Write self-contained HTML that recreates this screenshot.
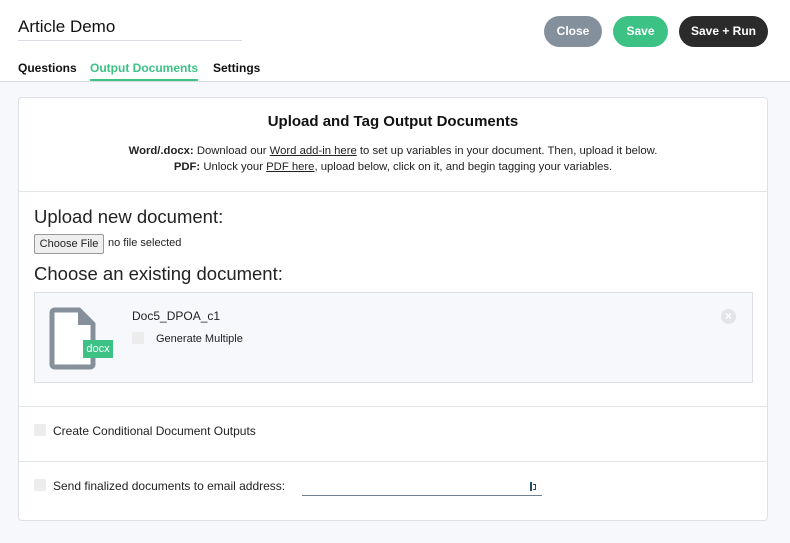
<!DOCTYPE html>
<html><head><meta charset="utf-8"><style>
*{box-sizing:border-box;margin:0;padding:0}
body{width:790px;height:543px;overflow:hidden;background:#f7f8fb;font-family:"Liberation Sans",sans-serif;color:#222;position:relative}
.top{position:absolute;left:0;top:0;width:790px;height:82px;background:#fff;border-bottom:1px solid #d8dbe0}
.abs{position:absolute}
.btn{position:absolute;top:16px;height:31px;border-radius:16px;color:#fff;font-weight:bold;font-size:12px;text-align:center;line-height:31px}
.card{position:absolute;left:18px;top:97px;width:750px;height:424px;background:#fff;border:1px solid #dde0e5;border-radius:4px}
.hr{position:absolute;left:0;width:748px;height:1px;background:#e2e4e8}
.cb{position:absolute;width:12px;height:12px;background:#ececec;border-radius:2px}
</style></head><body>
<div class="top">
 <div class="abs" style="left:18px;top:17px;font-size:17px;color:#111">Article Demo</div>
 <div class="abs" style="left:18px;top:40px;width:224px;height:1px;background:#dcdde2"></div>
 <div class="btn" style="left:544px;width:58px;background:#84909c">Close</div>
 <div class="btn" style="left:613px;width:55px;background:#3cc285">Save</div>
 <div class="btn" style="left:679px;width:89px;background:#2b2b2b">Save + Run</div>
 <div class="abs" style="left:18px;top:61px;font-size:12px;font-weight:bold;color:#111">Questions</div>
 <div class="abs" style="left:90px;top:61px;font-size:12px;font-weight:bold;color:#3cc285">Output Documents</div>
 <div class="abs" style="left:90px;top:79px;width:108px;height:2px;background:#3cc285"></div>
 <div class="abs" style="left:213px;top:61px;font-size:12px;font-weight:bold;color:#111">Settings</div>
</div>
<div class="card">
 <div class="abs" style="left:0;width:748px;top:15px;text-align:center;font-size:15px;font-weight:bold;color:#111">Upload and Tag Output Documents</div>
 <div class="abs" style="left:0;width:748px;top:47px;text-align:center;font-size:11.3px;color:#222"><b>Word/.docx:</b> Download our <u>Word add-in here</u> to set up variables in your document. Then, upload it below.</div>
 <div class="abs" style="left:0;width:748px;top:63px;text-align:center;font-size:11.3px;color:#222"><b>PDF:</b> Unlock your <u>PDF here</u>, upload below, click on it, and begin tagging your variables.</div>
 <div class="hr" style="top:93px"></div>
 <div class="abs" style="left:15px;top:108px;font-size:18.5px;color:#222">Upload new document:</div>
 <div class="abs" style="left:15px;top:136px;width:70px;height:20px;border:1px solid #999;border-radius:2px;background:#efefef;font-size:11px;line-height:18px;text-align:center">Choose File</div>
 <div class="abs" style="left:89px;top:139px;font-size:11px">no file selected</div>
 <div class="abs" style="left:15px;top:165px;font-size:18.5px;color:#222">Choose an existing document:</div>
 <div class="abs" style="left:15px;top:194px;width:719px;height:91px;background:#f7f8fb;border:1px solid #dcdfe6">
  <svg class="abs" style="left:14px;top:14px" width="50" height="64" viewBox="0 0 50 64"><path d="M6 3H30L44 17V57Q44 60 41 60H6Q3 60 3 57V6Q3 3 6 3Z" fill="#fff" stroke="#86909b" stroke-width="5" stroke-linejoin="round"/><path d="M29 4V18H43Z" fill="#86909b"/></svg>
  <div class="abs" style="left:48px;top:47px;width:30px;height:18px;background:#3cc285;color:#fff;font-size:11px;line-height:18px;text-align:center">docx</div>
  <div class="abs" style="left:97px;top:16px;font-size:12px">Doc5_DPOA_c1</div>
  <div class="cb" style="left:97px;top:39px"></div>
  <div class="abs" style="left:121px;top:40px;font-size:11px">Generate Multiple</div>
  <div class="abs" style="left:686px;top:16px;width:15px;height:15px;border-radius:50%;background:#e3e4e8;color:#fff;font-size:12px;line-height:15px;text-align:center;font-weight:bold">×</div>
 </div>
 <div class="hr" style="top:308px"></div>
 <div class="cb" style="left:15px;top:326px"></div>
 <div class="abs" style="left:34px;top:326px;font-size:12px">Create Conditional Document Outputs</div>
 <div class="hr" style="top:363px"></div>
 <div class="cb" style="left:15px;top:381px"></div>
 <div class="abs" style="left:34px;top:381px;font-size:12px">Send finalized documents to email address:</div>
 <div class="abs" style="left:283px;top:397px;width:240px;height:1px;background:#6f8191"></div>
 <div class="abs" style="left:511px;top:384px;width:2px;height:9px;background:#1d4f68"></div>
 <div class="abs" style="left:514px;top:386px;width:3px;height:6px;border:1px solid #1d4f68;border-left:none"></div>
</div>
</body></html>
